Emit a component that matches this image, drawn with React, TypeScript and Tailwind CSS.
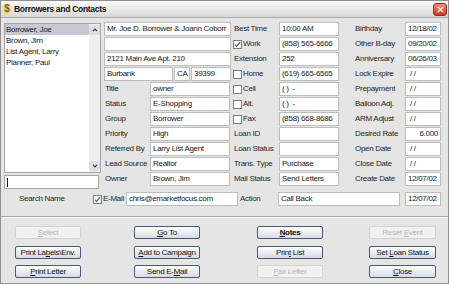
import React from "react";

type Row = { label: string; value: string; cb?: boolean; checked?: boolean; right?: boolean };

function Check({ checked = false }: { checked?: boolean }) {
  return (
    <span className="w-[9px] h-[9px] shrink-0 bg-white border border-[#7d7d7d] flex items-center justify-center">
      {checked && (
        <svg viewBox="0 0 8 8" className="w-[7px] h-[7px]">
          <path d="M1 4.2 L3 6.2 L7 1.2" stroke="#2f8a2f" strokeWidth="1.4" fill="none" />
        </svg>
      )}
    </span>
  );
}

function Field({ children, className = "" }: { children?: React.ReactNode; className?: string }) {
  return (
    <div className={"h-[14px] shrink-0 bg-white border border-[#bdbdbd] flex items-center px-[2px] overflow-hidden whitespace-pre text-[#1b1b1b] " + className}>
      {children}
    </div>
  );
}

function Btn({ children, disabled = false, className = "" }: { children: React.ReactNode; disabled?: boolean; className?: string }) {
  return disabled ? (
    <div className={"h-[13px] border border-[#d3d3d3] bg-[#f1f1f1] rounded-[2px] flex items-center justify-center text-[#b5b5b5] " + className}>
      <span className="whitespace-pre">{children}</span>
    </div>
  ) : (
    <div className={"h-[13px] border border-[#4b5877] rounded-[2px] bg-linear-to-b from-[#ffffff] to-[#d7dae3] flex items-center justify-center text-[#111] " + className}>
      <span className="whitespace-pre">{children}</span>
    </div>
  );
}

const colB: Row[] = [
  { label: "Title", value: "owner" },
  { label: "Status", value: "E-Shopping" },
  { label: "Group", value: "Borrower" },
  { label: "Priority", value: "High" },
  { label: "Referred By", value: "Larry List Agent" },
  { label: "Lead Source", value: "Realtor" },
  { label: "Owner", value: "Brown, Jim" },
];

const colC: Row[] = [
  { label: "Best Time", value: "10:00 AM" },
  { label: "Work", cb: true, checked: true, value: "(858) 565-6666" },
  { label: "Extension", value: "252" },
  { label: "Home", cb: true, value: "(619) 665-6565" },
  { label: "Cell", cb: true, value: "( )  -" },
  { label: "Alt.", cb: true, value: "( )  -" },
  { label: "Fax", cb: true, value: "(858) 668-8686" },
  { label: "Loan ID", value: "" },
  { label: "Loan Status", value: "" },
  { label: "Trans. Type", value: "Purchase" },
  { label: "Mail Status", value: "Send Letters" },
];

const colD: Row[] = [
  { label: "Birthday", value: "12/18/02" },
  { label: "Other B-day", value: "09/20/02" },
  { label: "Anniversary", value: "06/26/03" },
  { label: "Lock Expire", value: " / /" },
  { label: "Prepayment", value: " / /" },
  { label: "Balloon Adj.", value: " / /" },
  { label: "ARM Adjust", value: " / /" },
  { label: "Desired Rate", value: "6.000", right: true },
  { label: "Open Date", value: " / /" },
  { label: "Close Date", value: " / /" },
  { label: "Create Date", value: "12/07/02" },
];

const names = ["Borrower, Joe", "Brown, Jim", "List Agent, Larry", "Planner, Paul"];

export default function App() {
  return (
    <div className="w-[449px] h-[284px] bg-[#e5e5e5] border border-[#8f8f8f] flex flex-col font-['Liberation_Sans',Arial,sans-serif] text-[8px] tracking-[-0.3px] text-[#262626] leading-none overflow-hidden">
      {/* Title bar */}
      <div className="h-[17px] shrink-0 flex items-center bg-linear-to-b from-[#fbfbfb] to-[#d8d8d8] border-b border-[#a9a9a9]">
        <span className="ml-[1px] w-[10px] h-[11px] rounded-[3px] bg-[#eadcb0] flex items-center justify-center text-[10px] font-bold text-[#8a5812] tracking-normal">$</span>
        <span className="ml-[2px] text-[8.5px] font-bold text-[#111]">Borrowers and Contacts</span>
        <div className="ml-auto mr-[1px] w-[14px] h-[13px] rounded-[3px] bg-linear-to-b from-[#f08a78] to-[#c9392b] border border-[#9c2a20] flex items-center justify-center">
          <svg viewBox="0 0 8 8" className="w-[7px] h-[7px]">
            <path d="M1 1 L7 7 M7 1 L1 7" stroke="#fff" strokeWidth="1.6" />
          </svg>
        </div>
      </div>

      {/* Body */}
      <div className="flex flex-col pl-[3px] pt-[4px]">
        <div className="flex items-start">
          {/* Column A */}
          <div className="w-[97px] flex flex-col">
            <div className="mt-[1px] h-[150px] bg-white border border-[#a5a5a5] flex">
              <div className="flex-1 flex flex-col">
                {names.map((n, i) => (
                  <div key={n} className={"h-[11px] flex items-center pl-[1px] text-[#1b1b1b] " + (i === 0 ? "bg-[#c7c8d1]" : "")}>
                    {n}
                  </div>
                ))}
              </div>
              <div className="w-[11px] bg-[#efefef] flex flex-col justify-between py-[1px]">
                <div className="h-[10px] bg-[#dedede] rounded-[2px] flex items-center justify-center">
                  <svg viewBox="0 0 7 5" className="w-[6px] h-[4px]">
                    <path d="M1 4 L3.5 1.3 L6 4" stroke="#333" strokeWidth="1.3" fill="none" />
                  </svg>
                </div>
                <div className="h-[10px] bg-[#dedede] rounded-[2px] flex items-center justify-center">
                  <svg viewBox="0 0 7 5" className="w-[6px] h-[4px]">
                    <path d="M1 1 L3.5 3.7 L6 1" stroke="#333" strokeWidth="1.3" fill="none" />
                  </svg>
                </div>
              </div>
            </div>
            <div className="mt-[2px] w-[95px] h-[14px] bg-white border border-[#a5a5a5] flex items-center pl-[2px]">
              <span className="w-[1px] h-[9px] bg-[#111]" />
            </div>
          </div>

          {/* Column B */}
          <div className="ml-[3px] w-[127px] flex flex-col gap-[1px]">
            <Field>Mr. Joe D. Borrower &amp; Joann Coborr</Field>
            <Field> </Field>
            <Field>2121 Main Ave Apt. 210</Field>
            <div className="flex gap-[1px]">
              <Field className="w-[69px]">Burbank</Field>
              <Field className="w-[16px]">CA</Field>
              <Field className="flex-1">39399</Field>
            </div>
            {colB.map((r) => (
              <div key={r.label} className="flex items-center h-[14px]">
                <span className="w-[46px] pl-[1px]">{r.label}</span>
                <Field className="w-[80px]">{r.value}</Field>
              </div>
            ))}
          </div>

          {/* Column C */}
          <div className="ml-[2px] w-[106px] flex flex-col gap-[1px]">
            {colC.map((r) => (
              <div key={r.label} className="flex items-center h-[14px]">
                <span className="w-[46px] flex items-center">
                  {r.cb ? (
                    <>
                      <Check checked={r.checked} />
                      <span className="ml-[1px]">{r.label}</span>
                    </>
                  ) : (
                    <span className="pl-[1px] whitespace-nowrap">{r.label}</span>
                  )}
                </span>
                <Field className="w-[60px]">{r.value}</Field>
              </div>
            ))}
          </div>

          {/* Column D */}
          <div className="ml-[16px] w-[86px] flex flex-col gap-[1px]">
            {colD.map((r) => (
              <div key={r.label} className="flex items-center h-[14px]">
                <span className="w-[50px] whitespace-nowrap">{r.label}</span>
                <Field className={"w-[36px] " + (r.right ? "justify-end" : "")}>{r.value}</Field>
              </div>
            ))}
          </div>
        </div>

        {/* Email / action row */}
        <div className="mt-[3px] flex items-center h-[14px]">
          <span className="w-[89px] pl-[15px]">Search Name</span>
          <span className="w-[33px] flex items-center">
            <Check checked />
            <span className="ml-[1px]">E-Mail</span>
          </span>
          <Field className="w-[112px]">chris@emarketfocus.com</Field>
          <span className="w-[40px] pl-[2px]">Action</span>
          <Field className="w-[122px]">Call Back</Field>
          <Field className="ml-[5px] w-[36px]">12/07/02</Field>
        </div>
      </div>

      {/* separator */}
      <div className="mt-[10px] h-[2px] border-t border-[#a7a7a7] border-b border-b-[#fafafa]" />

      {/* Buttons */}
      <div className="flex mt-[8px] pl-[3px]">
        <div className="ml-[11px] w-[66px] flex flex-col">
          <Btn disabled><span className="underline">S</span>elect</Btn>
          <Btn className="mt-[7px]">Print La<span className="underline">b</span>els\Env.</Btn>
          <Btn className="mt-[6px]"><span className="underline">P</span>rint Letter</Btn>
        </div>
        <div className="ml-[53px] w-[66px] flex flex-col">
          <Btn><span className="underline">G</span>o To</Btn>
          <Btn className="mt-[7px]"><span className="underline">A</span>dd to Campaign</Btn>
          <Btn className="mt-[6px]">Send E-<span className="underline">M</span>ail</Btn>
        </div>
        <div className="ml-[57px] w-[66px] flex flex-col">
          <Btn className="font-bold"><span className="underline">N</span>otes</Btn>
          <Btn className="mt-[7px]">Prin<span className="underline">t</span> List</Btn>
          <Btn disabled className="mt-[6px]"><span className="underline">F</span>ax Letter</Btn>
        </div>
        <div className="ml-[46px] w-[67px] flex flex-col">
          <Btn disabled>Reset <span className="underline">E</span>vent</Btn>
          <Btn className="mt-[7px]">Set <span className="underline">L</span>oan Status</Btn>
          <Btn className="mt-[6px]"><span className="underline">C</span>lose</Btn>
        </div>
      </div>
    </div>
  );
}
